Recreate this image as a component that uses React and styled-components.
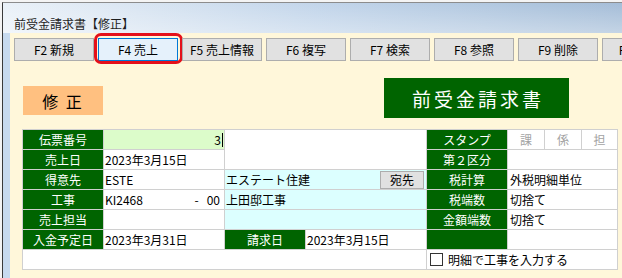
import React from 'react'
import styled, { createGlobalStyle } from 'styled-components'

const GlobalStyle = createGlobalStyle`
  html, body {
    margin: 0;
    padding: 0;
    background: #f4f4f4;
    overflow: hidden;
  }
  body {
    font-family: "Noto Sans CJK JP", "Liberation Sans", sans-serif;
    font-size: 12px;
    color: #000;
  }
`

const Window = styled.div`
  margin: 2px 0 0 2px;
  width: 700px;
  height: 276px;
  border-left: 1px solid #3a3a3a;
  border-top: 1px solid #8c8c8c;
  display: flex;
  flex-direction: column;
  background: #fff;
`

const TitleBar = styled.div`
  height: 30px;
  box-sizing: border-box;
  padding: 14px 0 0 11px;
  line-height: 14px;
  font-size: 12px;
  color: #1e1e1e;
  background:
    linear-gradient(to bottom, rgba(255, 255, 255, 0) 0%, rgba(255, 255, 255, 0.35) 100%),
    linear-gradient(to right, #eaf1f8 0%, #c2d5ea 45%, #9db7d3 100%);
`

const Body = styled.div`
  flex: 1;
  display: flex;
  flex-direction: column;
  border-left: 7px solid #c7daef;
  background: #fff7da;
`

const Toolbar = styled.div`
  display: flex;
  gap: 4px;
  padding: 5px 0 0 4px;
  height: 23px;
`

const FButton = styled.div`
  position: relative;
  flex: 0 0 80px;
  height: 23px;
  box-sizing: border-box;
  border: 1px solid ${p => (p.$active ? '#0078d7' : '#adadad')};
  background: ${p => (p.$active ? '#e5f1fb' : '#e1e1e1')};
  display: flex;
  align-items: center;
  justify-content: center;
  font-size: 12px;
  white-space: pre;

  ${p => p.$active && `
    &::after {
      content: '';
      position: absolute;
      left: -5px;
      right: -6px;
      top: -6px;
      bottom: -4px;
      border: 3px solid #e4101a;
      border-radius: 7px;
    }
  `}
`

const Header = styled.div`
  height: 68px;
  box-sizing: border-box;
  display: flex;
  align-items: flex-start;
  padding: 17px 0 0 13px;
`

const ModeBadge = styled.div`
  width: 80px;
  height: 29px;
  margin-top: 8px;
  background: #ffc080;
  display: flex;
  align-items: center;
  justify-content: center;
  font-size: 16px;
  letter-spacing: 2px;
  white-space: pre;
`

const DocTitle = styled.div`
  width: 185px;
  height: 40px;
  margin-left: 281px;
  background: #006400;
  color: #fff;
  display: flex;
  align-items: center;
  justify-content: center;
  font-size: 19px;
  letter-spacing: 3px;
  padding-left: 3px;
  box-sizing: border-box;
`

const Grid = styled.div`
  margin-left: 12px;
  width: fit-content;
  display: grid;
  grid-template-columns: 80px 120px 80px 120px 80px 36px 36px 35px;
  grid-auto-rows: 19px;
  gap: 1px;
  border: 1px solid #d0d0d0;
  background: #d0d0d0;
`

const Label = styled.div`
  grid-column: span ${p => p.$span || 1};
  background: #006400;
  color: #fff;
  text-align: center;
  line-height: 19px;
  font-size: 12px;
`

const Cell = styled.div`
  grid-column: span ${p => p.$span || 1};
  grid-row: span ${p => p.$rows || 1};
  background: ${p => p.$bg || '#fff'};
  line-height: 19px;
  padding: 0 ${p => p.$pr || 2}px 0 ${p => p.$pl || 1}px;
  display: flex;
  align-items: center;
  justify-content: ${p => p.$justify || 'flex-start'};
  white-space: pre;
  overflow: hidden;
`

const Stamp = styled.div`
  background: #fff;
  color: #a3a3a3;
  text-align: center;
  line-height: 19px;
`

const Caret = styled.span`
  display: inline-block;
  width: 1px;
  height: 14px;
  margin-left: 1px;
  background: #000;
`

const SmallButton = styled.div`
  margin-left: auto;
  width: 44px;
  height: 18px;
  box-sizing: border-box;
  border: 1px solid #adadad;
  background: #e1e1e1;
  display: flex;
  align-items: center;
  justify-content: center;
  line-height: 16px;
`

const CheckBox = styled.span`
  display: inline-block;
  width: 13px;
  height: 13px;
  box-sizing: border-box;
  border: 1px solid #333;
  background: #fff;
  margin: 0 5px 0 2px;
`

const keys = ['F2 新規', 'F4 売上', 'F5 売上情報', 'F6 複写', 'F7 検索', 'F8 参照', 'F9 削除', 'F10 登録']

export default function App() {
  return (
    <>
      <GlobalStyle />
      <Window>
        <TitleBar>前受金請求書【修正】</TitleBar>
        <Body>
          <Toolbar>
            {keys.map(k => (
              <FButton key={k} $active={k === 'F4 売上'}>{k}</FButton>
            ))}
          </Toolbar>

          <Header>
            <ModeBadge>修 正</ModeBadge>
            <DocTitle>前受金請求書</DocTitle>
          </Header>

          <Grid>
            <Label>伝票番号</Label>
            <Cell $bg="#dcfcca" $justify="flex-end" $pr={1}>3<Caret /></Cell>
            <Cell $span={2} $rows={2} />
            <Label>スタンプ</Label>
            <Stamp>課</Stamp>
            <Stamp>係</Stamp>
            <Stamp>担</Stamp>

            <Label>売上日</Label>
            <Cell>2023年3月15日</Cell>
            <Label>第２区分</Label>
            <Cell $span={3} />

            <Label>得意先</Label>
            <Cell>ESTE</Cell>
            <Cell $span={2} $bg="#dcffff" $pr={0}>
              エステート住建
              <SmallButton>宛先</SmallButton>
            </Cell>
            <Label>税計算</Label>
            <Cell $span={3} $pl={2}>外税明細単位</Cell>

            <Label>工事</Label>
            <Cell $justify="space-between" $pr={4}>
              <span>KI2468</span>
              <span>-   00</span>
            </Cell>
            <Cell $span={2} $bg="#dcffff">上田邸工事</Cell>
            <Label>税端数</Label>
            <Cell $span={3} $pl={2}>切捨て</Cell>

            <Label>売上担当</Label>
            <Cell />
            <Cell $span={2} $bg="#dcffff" />
            <Label>金額端数</Label>
            <Cell $span={3} $pl={2}>切捨て</Cell>

            <Label>入金予定日</Label>
            <Cell>2023年3月31日</Cell>
            <Label>請求日</Label>
            <Cell>2023年3月15日</Cell>
            <Label />
            <Cell $span={3} />

            <Cell $span={4} />
            <Cell $span={4}>
              <CheckBox />
              明細で工事を入力する
            </Cell>
          </Grid>
        </Body>
      </Window>
    </>
  )
}
